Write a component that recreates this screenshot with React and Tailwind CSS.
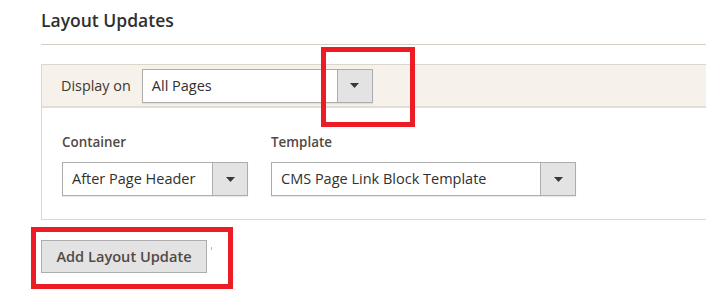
const FONT = { fontFamily: '"Open Sans", "Liberation Sans", sans-serif' }

function Select({ value, width }) {
  return (
    <div
      className="flex h-[34px] border border-[#adadad] bg-white shadow-[0_1px_1px_rgba(0,0,0,0.08)]"
      style={{ width }}
    >
      <div className="flex-1 flex items-center pl-[9px] text-[14.5px] text-[#303030] whitespace-nowrap overflow-hidden">
        {value}
      </div>
      <div className="w-[35px] flex items-center justify-center bg-[#e3e3e3] border-l border-[#adadad]">
        <svg width="9" height="5" viewBox="0 0 9 5">
          <path d="M0 0 H9 L4.5 5 Z" fill="#41362f" />
        </svg>
      </div>
    </div>
  )
}

export default function App() {
  return (
    <div className="relative w-[727px] h-[295px] bg-white overflow-hidden" style={FONT}>
      <div className="pl-[41px] pr-[21px]">
        <h2 className="pt-[10px] text-[17.5px] leading-[20px] font-semibold text-[#303030]">
          Layout Updates
        </h2>
        <div className="mt-[14px] border-t border-[#d6cfc4]" />

        <div className="mt-[19px] border border-r-0 border-[#dcd6cd]">
          <div className="h-[43px] flex items-center gap-[11px] pl-[19px] bg-[#f6f2eb] border-b-2 border-[#e2ddd5]">
            <span className="text-[14.4px] text-[#41362f]">Display on</span>
            <Select value="All Pages" width={231} />
          </div>
          <div className="flex gap-[23px] pl-[20px] pt-[25px] pb-[23px]">
            <div>
              <div className="text-[13.4px] font-semibold text-[#514943] leading-[18px] mb-[11px]">
                Container
              </div>
              <Select value="After Page Header" width={186} />
            </div>
            <div>
              <div className="text-[13.4px] font-semibold text-[#514943] leading-[18px] mb-[11px]">
                Template
              </div>
              <Select value="CMS Page Link Block Template" width={305} />
            </div>
          </div>
        </div>

        <button
          type="button"
          className="mt-[20px] w-[166px] h-[33px] bg-[#e3e3e3] border border-[#adadad] text-[14.6px] font-semibold text-[#514943]"
        >
          Add Layout Update
        </button>
      </div>

      <div className="absolute left-[321px] top-[47px] w-[94px] h-[80px] border-[5px] border-[#ed1c24]" />
      <div className="absolute left-[31px] top-[227px] w-[202px] h-[62px] border-[5px] border-[#ed1c24]" />
      <div className="absolute left-[211px] top-[247px] w-px h-[3px] bg-[#f2a0a3]" />
    </div>
  )
}
